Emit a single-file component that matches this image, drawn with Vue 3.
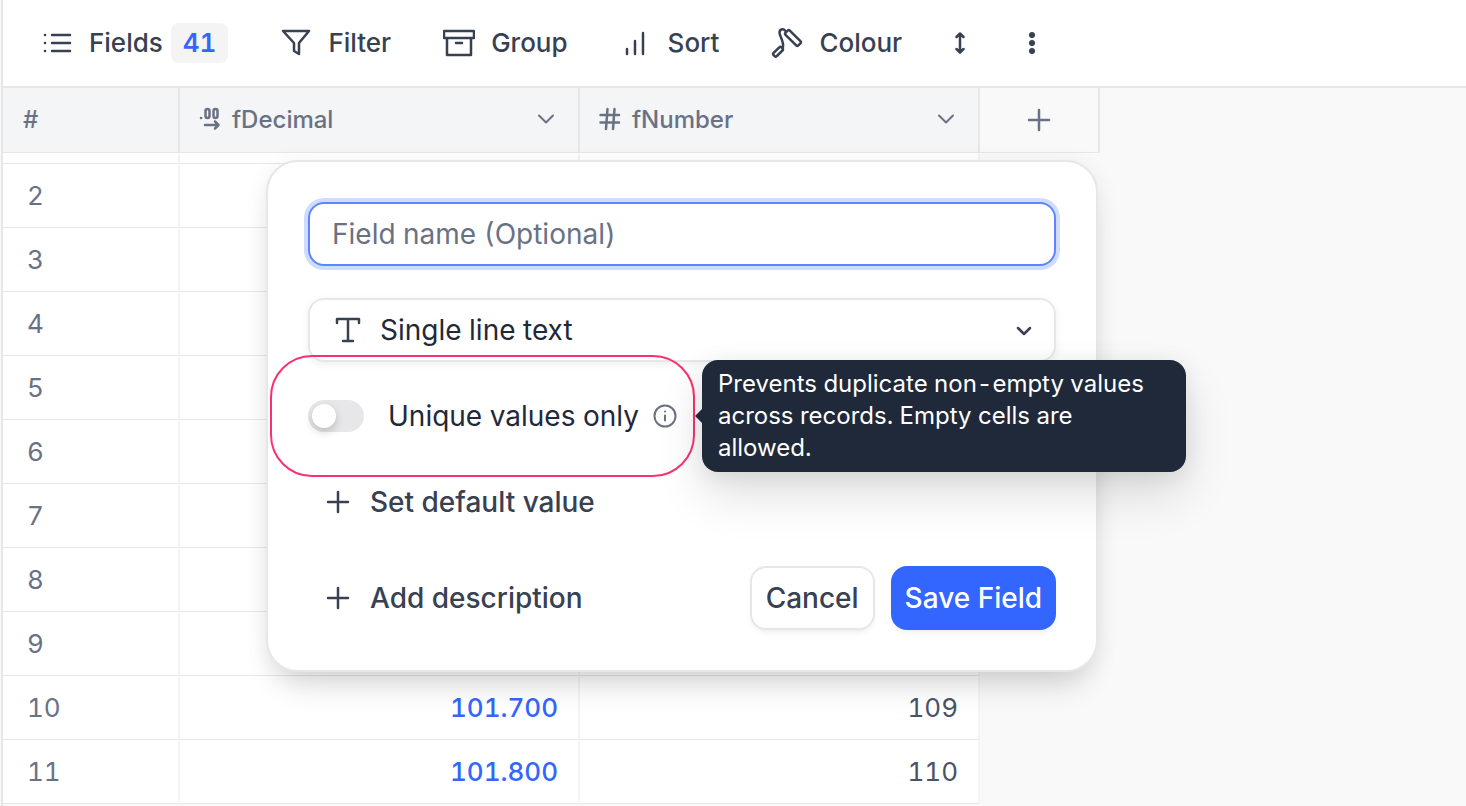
<template>
  <main class="view">
    <nav class="toolbar" aria-label="View options">
      <button type="button" class="tool">
        <svg class="icon" viewBox="0 0 32 32" aria-hidden="true">
          <path d="M11 8h18M11 16h18M11 24h18" />
          <path d="M4 8h.1M4 16h.1M4 24h.1" />
        </svg>
        <span>Fields</span>
        <span class="count">{{ fieldCount }}</span>
      </button>
      <button type="button" class="tool">
        <svg class="icon" viewBox="0 0 32 32" aria-hidden="true">
          <path d="M3 4h26L19 16v11l-5-3v-8z" />
        </svg>
        <span>Filter</span>
      </button>
      <button type="button" class="tool">
        <svg class="icon" viewBox="0 0 32 32" aria-hidden="true">
          <path d="M4 11v17h24V11M1 4h30v7H1zM13 16h6" />
        </svg>
        <span>Group</span>
      </button>
      <button type="button" class="tool">
        <svg class="icon" viewBox="0 0 32 32" aria-hidden="true">
          <path d="M7 22v5M15 14v13M23 6v21" />
        </svg>
        <span>Sort</span>
      </button>
      <button type="button" class="tool">
        <svg class="icon" viewBox="0 0 32 32" aria-hidden="true">
          <rect x="13" y="8" width="18" height="6" rx="1.5" transform="rotate(45 22 11)" />
          <rect x="1.500" y="22.500" width="11" height="4.500" rx="1.5" transform="rotate(-45 7 24.700)" />
          <path d="M14.500 4C12 1 8.500 2.500 8.500 5.500c0 3.500 4.500 9 3.500 14.500" />
        </svg>
        <span>Colour</span>
      </button>
      <div class="tool-group">
        <button type="button" class="tool" aria-label="Row height">
          <svg class="icon" viewBox="0 0 32 32" aria-hidden="true">
            <path d="M16 7v18M12.500 10 16 6.500l3.500 3.500M12.500 22l3.500 3.500 3.500-3.500" />
          </svg>
        </button>
        <button type="button" class="tool" aria-label="More actions">
          <svg class="icon dots" viewBox="0 0 32 32" aria-hidden="true">
            <circle cx="16" cy="8" r="3" />
            <circle cx="16" cy="16" r="3" />
            <circle cx="16" cy="24" r="3" />
          </svg>
        </button>
      </div>
    </nav>

    <section class="canvas">
      <table class="grid">
        <colgroup>
          <col class="col-index" />
          <col class="col-field" />
          <col class="col-field" />
          <col class="col-add" />
        </colgroup>
        <thead>
          <tr>
            <th scope="col">#</th>
            <th scope="col" class="field-cell">
              <div class="field-head">
                <svg class="field-icon" viewBox="0 0 24 24" aria-hidden="true">
                  <path d="M3 11h.1" />
                  <rect x="7.500" y="2" width="4" height="9" rx="2" />
                  <rect x="15.500" y="2" width="4" height="9" rx="2" />
                  <path d="M7 18h13M17 14.500l3.500 3.500-3.500 3.500" />
                </svg>
                <span>fDecimal</span>
                <svg class="chevron" viewBox="0 0 24 24" aria-hidden="true"><path d="m5 8.500 7 7 7-7" /></svg>
              </div>
            </th>
            <th scope="col" class="field-cell">
              <div class="field-head">
                <svg class="field-icon" viewBox="0 0 24 24" aria-hidden="true">
                  <path d="M2.500 8h18.500M2.500 15.500h18.500M9.500 2 8 22M16.500 2 15 22" />
                </svg>
                <span>fNumber</span>
                <svg class="chevron" viewBox="0 0 24 24" aria-hidden="true"><path d="m5 8.500 7 7 7-7" /></svg>
              </div>
            </th>
            <th scope="col" class="add-cell">
              <button type="button" class="add-field" aria-label="Add field">
                <svg class="field-icon" viewBox="0 0 24 24" aria-hidden="true"><path d="M12 2v20M2 12h20" /></svg>
              </button>
            </th>
          </tr>
        </thead>
        <tbody>
          <tr class="scrolled">
            <td></td>
            <td></td>
            <td></td>
          </tr>
          <tr v-for="row in rows" :key="row.id">
            <td>{{ row.id }}</td>
            <td class="number link">{{ row.decimal }}</td>
            <td class="number">{{ row.number }}</td>
          </tr>
        </tbody>
      </table>

      <form class="editor" @submit.prevent>
        <input v-model="name" class="name-input" type="text" placeholder="Field name (Optional)" aria-label="Field name" />

        <div class="type-select">
          <svg class="type-icon" viewBox="0 0 32 32" aria-hidden="true">
            <path d="M5 9V5h22v4M16 5v22M11 27h10" />
          </svg>
          <select v-model="type" aria-label="Field type">
            <option>Single line text</option>
            <option>Decimal</option>
            <option>Number</option>
          </select>
          <svg class="type-chevron" viewBox="0 0 24 24" aria-hidden="true"><path d="m6 10 6 6 6-6" /></svg>
        </div>

        <div class="unique">
          <input id="unique" v-model="unique" class="switch" type="checkbox" role="switch" />
          <label for="unique">Unique values only</label>
          <span class="info">
            <svg viewBox="0 0 24 24" aria-hidden="true">
              <circle cx="12" cy="12" r="10.500" />
              <path d="M12 11.500v5M12 7.500h.1" />
            </svg>
            <span class="tooltip" role="tooltip">Prevents duplicate non-empty values across records. Empty cells are allowed.</span>
          </span>
          <span class="highlight" aria-hidden="true"></span>
        </div>

        <button type="button" class="text-button default-value">
          <svg viewBox="0 0 24 24" aria-hidden="true"><path d="M12 2v20M2 12h20" /></svg>
          Set default value
        </button>

        <div class="footer">
          <button type="button" class="text-button">
            <svg viewBox="0 0 24 24" aria-hidden="true"><path d="M12 2v20M2 12h20" /></svg>
            Add description
          </button>
          <div class="actions">
            <button type="button" class="action">Cancel</button>
            <button type="submit" class="action primary">Save Field</button>
          </div>
        </div>
      </form>
    </section>
  </main>
</template>

<script setup>
import { ref } from 'vue'

const fieldCount = 41
const name = ref('')
const type = ref('Single line text')
const unique = ref(false)

// ids 2 to 11, values grow together with the id
// rows behind the editor keep their numbers hidden
const rows = Array.from({ length: 10 }, (_, index) => {
  const id = index + 2
  const covered = id < 10
  return {
    id,
    decimal: covered ? '' : (100.7 + id / 10).toFixed(3),
    number: covered ? '' : 99 + id,
  }
})
</script>

<style>
body {
  margin: 0;
  background: #f9f9fa;
}
</style>

<style scoped>
.view {
  box-sizing: border-box;
  height: 100vh;
  overflow: hidden;
  display: flex;
  flex-direction: column;
  margin-left: 1px;
  border-left: 2px solid #e7e7e9;
  color: #374151;
  font-family: Inter, sans-serif;
  font-size: 26px;
  font-variation-settings: 'opsz' 14;
  font-feature-settings: 'tnum';
}

button,
input,
select {
  font: inherit;
  font-feature-settings: inherit;
  font-variation-settings: inherit;
  color: inherit;
}

button {
  padding: 0;
  border: 0;
  background: none;
  cursor: pointer;
}

svg {
  flex: none;
  fill: none;
  stroke: currentColor;
  stroke-width: 2.5;
  stroke-linecap: round;
  stroke-linejoin: round;
}

.toolbar {
  flex: none;
  display: flex;
  align-items: center;
  gap: 52px;
  height: 86px;
  padding-left: 38px;
  background: #fff;
  border-bottom: 2px solid #e7e7e9;
}

.tool {
  display: flex;
  align-items: center;
  gap: 16px;
  font-weight: 500;
  line-height: 32px;
}

.tool-group {
  display: flex;
  gap: 40px;
  margin-left: -10px;
}

.icon {
  width: 32px;
  height: 32px;
}

.dots {
  fill: currentColor;
  stroke: none;
}

.count {
  margin-left: -8px;
  padding: 0 12px;
  border-radius: 8px;
  background: #f4f4f5;
  color: #3366ff;
  font-weight: 600;
  line-height: 40px;
}

.canvas {
  position: relative;
  flex: 1;
}

.grid {
  table-layout: fixed;
  width: 1097px;
  border-collapse: separate;
  border-spacing: 0;
  color: #4a5268;
}

.col-index {
  width: 177px;
}

.col-field {
  width: 400px;
}

.col-add {
  width: 120px;
}

th {
  box-sizing: border-box;
  height: 65px;
  padding: 0 20px 2px;
  border-right: 2px solid #e7e7e9;
  border-bottom: 1px solid #e7e7e9;
  background: #f4f5f7;
  color: #6a7184;
  font-weight: 500;
  font-size: 24px;
  text-align: left;
}

.field-cell {
  padding-left: 18px;
}

.field-head {
  display: flex;
  align-items: center;
  gap: 10px;
}

.field-icon {
  width: 24px;
  height: 24px;
}

.chevron {
  width: 24px;
  height: 24px;
  margin-left: auto;
  stroke-width: 2;
}

.add-cell {
  padding: 0;
  background: #f9f9fa;
}

.add-field {
  display: flex;
  align-items: center;
  justify-content: center;
  width: 100%;
  height: 64px;
}

td {
  box-sizing: border-box;
  height: 64px;
  padding: 0 20px 0 24px;
  border-right: 2px solid #f4f4f5;
  border-bottom: 1px solid #e7e7e9;
  background: #fff;
}

td:first-child {
  color: #6a7184;
}

.scrolled td {
  height: 11px;
}

.number {
  text-align: right;
}

.link {
  color: #3366ff;
  font-weight: 500;
}

.editor {
  position: absolute;
  top: 72px;
  left: 263px;
  box-sizing: border-box;
  width: 832px;
  padding: 40px;
  border: 2px solid #e7e7e9;
  border-radius: 32px;
  background: #fff;
  box-shadow: 0 24px 32px -12px rgba(0, 0, 0, 0.14), 0 4px 24px rgba(0, 0, 0, 0.07);
  font-size: 28px;
}

.name-input {
  display: block;
  box-sizing: border-box;
  width: 100%;
  height: 64px;
  padding: 0 22px;
  border: 2px solid #5c85ff;
  border-radius: 16px;
  outline: 0;
  box-shadow: 0 0 0 4px #cfdcff;
}

.name-input::placeholder {
  color: #6a7184;
  opacity: 1;
}

.type-select {
  display: flex;
  align-items: center;
  box-sizing: border-box;
  height: 64px;
  margin-top: 32px;
  padding: 0 18px 0 22px;
  border: 2px solid #e7e7e9;
  border-radius: 16px;
  box-shadow: 0 2px 8px rgba(0, 0, 0, 0.07);
}

.type-icon {
  width: 32px;
  height: 32px;
}

.type-select select {
  flex: 1;
  height: 60px;
  padding: 0 16px;
  border: 0;
  outline: 0;
  appearance: none;
  background: none;
  color: #1f293a;
}

.type-chevron {
  width: 24px;
  height: 24px;
}

.unique {
  position: relative;
  display: flex;
  align-items: center;
  height: 64px;
  margin-top: 22px;
  color: #1f293a;
}

.switch {
  flex: none;
  width: 56px;
  height: 32px;
  margin: 0 24px 0 0;
  padding: 4px;
  box-sizing: border-box;
  appearance: none;
  border-radius: 16px;
  background: #e7e7e9;
}

.switch::before {
  content: '';
  display: block;
  width: 24px;
  height: 24px;
  border-radius: 50%;
  background: #fff;
  box-shadow: 0 4px 8px rgba(0, 35, 11, 0.2);
}

.switch:checked {
  background: #3366ff;
}

.switch:checked::before {
  margin-left: 24px;
}

.info {
  position: relative;
  display: flex;
  margin-left: 14px;
  color: #6a7184;
}

.info svg {
  width: 24px;
  height: 24px;
  stroke-width: 2;
}

.tooltip {
  position: absolute;
  z-index: 2;
  top: 50%;
  left: 49px;
  transform: translateY(-50%);
  box-sizing: border-box;
  width: 484px;
  padding: 8px 16px;
  border-radius: 16px;
  background: #1f293a;
  color: #fff;
  font-size: 24px;
  line-height: 32px;
  box-shadow: 0 24px 48px rgba(0, 0, 0, 0.12), 0 4px 24px rgba(0, 0, 0, 0.08);
}

.tooltip::before {
  content: '';
  position: absolute;
  top: 50%;
  left: -7px;
  margin-top: -7px;
  border: solid transparent;
  border-width: 7px 7px 7px 0;
  border-right-color: #1f293a;
}

.highlight {
  position: absolute;
  top: -29px;
  left: -38px;
  box-sizing: border-box;
  width: 425px;
  height: 122px;
  border: 2px solid #fc3070;
  border-radius: 42px;
  pointer-events: none;
}

.text-button {
  display: flex;
  align-items: center;
  gap: 20px;
  height: 64px;
  padding-left: 18px;
  font-weight: 500;
  font-feature-settings: normal;
}

.text-button svg {
  width: 24px;
  height: 24px;
}

.default-value {
  margin-top: 22px;
}

.footer {
  display: flex;
  align-items: center;
  justify-content: space-between;
  margin-top: 32px;
}

.actions {
  display: flex;
  gap: 16px;
}

.action {
  box-sizing: border-box;
  height: 64px;
  padding: 0 14px;
  border: 2px solid #e7e7e9;
  border-radius: 16px;
  background: #fff;
  font-weight: 500;
  font-feature-settings: normal;
  box-shadow: 0 4px 6px -2px rgba(0, 0, 0, 0.08);
}

.primary {
  padding: 0 14px;
  border: 0;
  background: #3366ff;
  color: #fff;
}
</style>
